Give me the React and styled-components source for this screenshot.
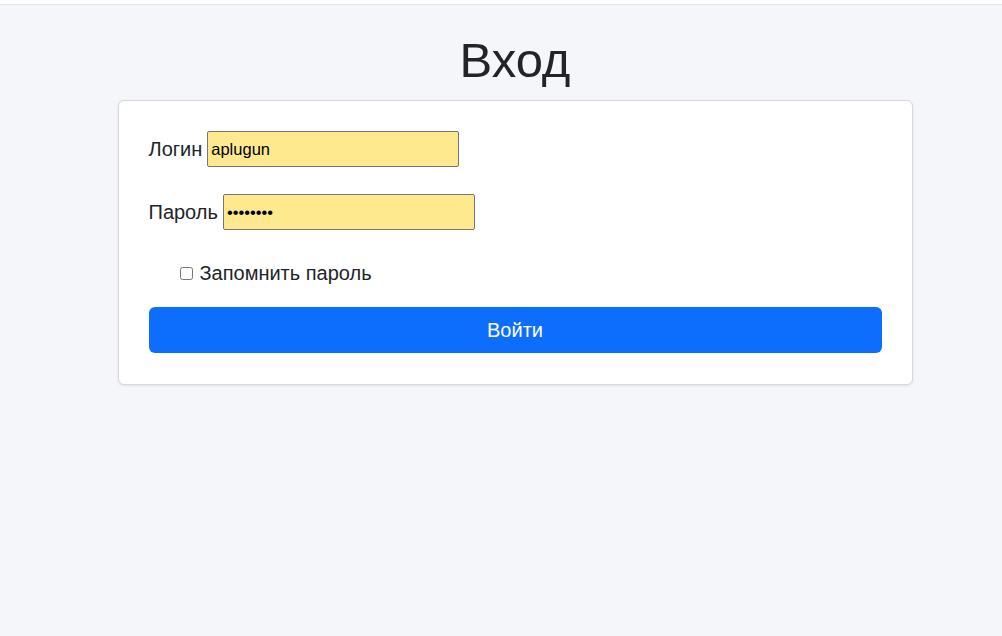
import styled, { createGlobalStyle } from "styled-components";

const GlobalStyle = createGlobalStyle`
  html, body {
    margin: 0;
    padding: 0;
    background: #f5f6fa;
    font-family: "Liberation Sans", Arial, sans-serif;
    color: #212529;
  }
`;

const TopStrip = styled.div`
  height: 4px;
  background: #ffffff;
  border-bottom: 1px solid #e3e4e8;
`;

const Page = styled.div`
  min-height: 631px;
  padding-left: 28px;
  background: #f5f6fa;
  display: flex;
  flex-direction: column;
  align-items: center;
`;

const Heading = styled.h1`
  margin: 26px 0 11px;
  font-size: 49px;
  font-weight: 400;
  line-height: 58px;
  color: #212529;
`;

const Card = styled.form`
  width: 733px;
  padding: 30px 30px 31px;
  background: #fff;
  border: 1px solid #d6d8dc;
  border-radius: 6px;
  box-shadow: 0 1px 3px rgba(0, 0, 0, 0.08);
  display: flex;
  flex-direction: column;
`;

const Row = styled.div`
  display: flex;
  align-items: center;
  gap: 5px;
  margin-bottom: ${(p) => p.$gap || 27}px;
  font-size: 20px;
`;

const Input = styled.input`
  box-sizing: border-box;
  width: 252px;
  height: 36px;
  padding: 0 3px;
  background: #fee98f;
  border: 1px solid #767676;
  border-radius: 2px;
  font-family: "Liberation Sans", Arial, sans-serif;
  font-size: 16.5px;
  color: #000;
  outline: none;
`;

const CheckRow = styled.label`
  display: flex;
  align-items: center;
  gap: 7px;
  padding-left: 31px;
  margin-bottom: 22px;
  font-size: 20px;
`;

const Checkbox = styled.input`
  margin: 0;
  width: 13px;
  height: 13px;
`;

const Submit = styled.button`
  height: 46px;
  border: none;
  border-radius: 6px;
  background: #0d6efd;
  color: #fff;
  font-family: "Liberation Sans", Arial, sans-serif;
  font-size: 20px;
  cursor: pointer;
`;

export default function App() {
  return (
    <>
      <GlobalStyle />
      <TopStrip />
      <Page>
        <Heading>Вход</Heading>
        <Card onSubmit={(e) => e.preventDefault()}>
          <Row>
            <span>Логин</span>
            <Input type="text" defaultValue="aplugun" />
          </Row>
          <Row $gap={32}>
            <span>Пароль</span>
            <Input type="password" defaultValue="password" />
          </Row>
          <CheckRow>
            <Checkbox type="checkbox" />
            Запомнить пароль
          </CheckRow>
          <Submit type="submit">Войти</Submit>
        </Card>
      </Page>
    </>
  );
}
